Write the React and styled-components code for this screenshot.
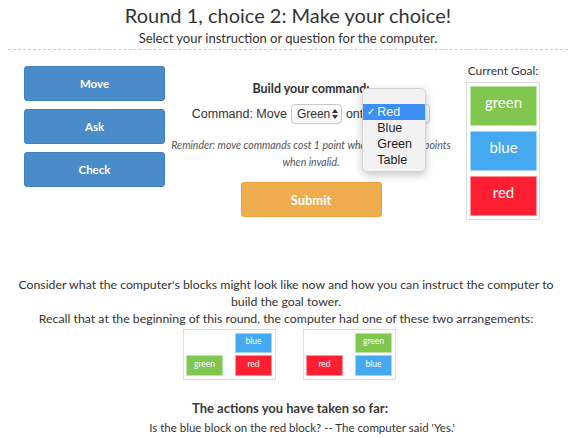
import React from "react";
import styled, { createGlobalStyle } from "styled-components";

const Global = createGlobalStyle`
  html, body { margin: 0; padding: 0; background: #fff; }
  body { font-family: Lato, "Open Sans", sans-serif; color: #333; }
`;

const Page = styled.div`
  width: 568px;
  height: 438px;
  overflow: hidden;
`;

const Header = styled.header`
  margin-left: 8px;
  padding-top: 2px;
  padding-bottom: 2px;
  border-bottom: 1px dashed #ccc;
  text-align: center;
`;

const Title = styled.h1`
  margin: 0;
  font-size: 20px;
  font-weight: 400;
  line-height: 26px;
  color: #333;
`;

const Subtitle = styled.p`
  margin: 2px 0 0;
  font-size: 13px;
  line-height: 17px;
  color: #333;
`;

const Board = styled.section`
  display: grid;
  grid-template-columns: 141px 280px 92px;
  column-gap: 6px;
  padding: 16px 0 0 24px;
  align-items: start;
`;

const ActionList = styled.div`
  display: flex;
  flex-direction: column;
  gap: 8px;
`;

const Button = styled.button`
  display: flex;
  align-items: center;
  justify-content: center;
  width: 141px;
  height: 35px;
  border: 1px solid ${(p) => (p.$tone === "warning" ? "#eea236" : "#3f82bf")};
  border-radius: 3px;
  background: ${(p) => (p.$tone === "warning" ? "#f0ad4e" : "#4a8bc9")};
  color: #fff;
  font-family: Lato, sans-serif;
  font-size: ${(p) => (p.$tone === "warning" ? "13px" : "11.5px")};
  font-weight: 700;
  padding: 0;
`;

const Builder = styled.div`
  display: flex;
  flex-direction: column;
  align-items: center;
  padding-top: 15px;
`;

const BuilderLabel = styled.div`
  font-size: 12.5px;
  font-weight: 700;
  line-height: 15px;
  color: #333;
`;

const CommandRow = styled.div`
  display: flex;
  align-items: center;
  gap: 4px;
  margin-top: 8px;
  font-family: "Liberation Sans", Arial, sans-serif;
  font-size: 12.5px;
  color: #333;
  height: 20px;
  white-space: nowrap;
`;

const Select = styled.div`
  position: relative;
  display: inline-flex;
  align-items: center;
  justify-content: space-between;
  gap: 2px;
  width: ${(p) => p.$width};
  box-sizing: border-box;
  height: 20px;
  padding: 0 3px 0 5px;
  border: 1px solid #c8c8c8;
  border-radius: 4px;
  background: linear-gradient(#fff, #f4f4f4);
  font-family: "Liberation Sans", Arial, sans-serif;
  font-size: 12px;
  color: #333;
`;

const SelectArrows = styled.svg`
  flex: none;
  width: 6px;
  height: 10px;
  fill: #333;
`;

const Popup = styled.ul`
  position: absolute;
  left: -13px;
  top: -17px;
  width: 64px;
  box-sizing: border-box;
  margin: 0;
  padding: 15px 0 3px;
  list-style: none;
  background: #f2f2f2;
  border: 1px solid #d4d4d4;
  border-radius: 5px;
  box-shadow: 0 3px 8px rgba(0, 0, 0, 0.22);
  font-family: "Liberation Sans", Arial, sans-serif;
  font-size: 12.5px;
  z-index: 2;
`;

const Option = styled.li`
  position: relative;
  height: 16px;
  line-height: 16px;
  padding-left: 14px;
  color: ${(p) => (p.$active ? "#fff" : "#222")};
  background: ${(p) => (p.$active ? "#3d8ef2" : "transparent")};
`;

const Check = styled.span`
  position: absolute;
  left: 4px;
  top: 0;
  font-size: 10px;
`;

const Reminder = styled.p`
  margin: 13px 0 0;
  font-size: 10.5px;
  font-style: italic;
  line-height: 17px;
  color: #555;
  text-align: center;
  white-space: nowrap;
`;

const SubmitWrap = styled.div`
  margin-top: 11px;
`;

const Goal = styled.div`
  display: flex;
  flex-direction: column;
  align-items: center;
`;

const GoalLabel = styled.div`
  margin: -2px 0 4px;
  font-size: 12px;
  line-height: 14px;
  color: #333;
`;

const Tower = styled.div`
  display: flex;
  flex-direction: column;
  gap: 5px;
  padding: 3px 2px 3px 3px;
  border: 1px solid #ddd;
  background: #fff;
`;

const COLORS = { green: "#80c64f", blue: "#45a9f0", red: "#fe1f32" };

const Block = styled.div`
  display: flex;
  align-items: center;
  justify-content: center;
  width: ${(p) => (p.$small ? "37px" : "67px")};
  height: ${(p) => (p.$small ? "100%" : "40px")};
  padding-bottom: ${(p) => (p.$small ? "3px" : "8px")};
  box-sizing: border-box;
  background: ${(p) => COLORS[p.$color]};
  border: 1px solid rgba(255, 255, 255, 0.5);
  color: #fff;
  font-size: ${(p) => (p.$small ? "8.5px" : "15px")};
  font-family: Lato, sans-serif;
`;

const Notes = styled.section`
  margin-top: 56px;
  text-align: center;
  font-size: 12.3px;
  line-height: 17px;
  color: #333;
  padding-left: 4px;
`;

const Note = styled.p`
  margin: 0;
`;

const Arrangements = styled.div`
  display: flex;
  justify-content: center;
  align-items: flex-start;
  gap: 27px;
  margin-top: 2px;
  padding-left: 7px;
`;

const Arrangement = styled.div`
  display: grid;
  grid-template-columns: 37px 37px;
  grid-template-rows: 20px 21px;
  column-gap: 12px;
  row-gap: 2px;
  padding: 3px 3px 3px 2px;
  border: 1px solid #ddd;
`;

const History = styled.section`
  margin-top: 19px;
  text-align: center;
`;

const HistoryTitle = styled.div`
  font-size: 13px;
  font-weight: 700;
  line-height: 18px;
  color: #3a3a3a;
  padding-left: 12px;
`;

const HistoryItem = styled.div`
  margin-top: 3px;
  font-size: 11.5px;
  line-height: 15px;
  color: #333;
  padding-left: 36px;
`;

const Empty = styled.div``;

const arrangements = [
  [null, "blue", "green", "red"],
  [null, "green", "red", "blue"],
];

const Arrows = () => (
  <SelectArrows viewBox="0 0 6 10">
    <path d="M3 0 L6 4 L0 4 Z M3 10 L6 6 L0 6 Z" />
  </SelectArrows>
);

export default function App() {
  return (
    <Page>
      <Global />
      <Header>
        <Title>Round 1, choice 2: Make your choice!</Title>
        <Subtitle>Select your instruction or question for the computer.</Subtitle>
      </Header>

      <Board>
        <ActionList>
          <Button>Move</Button>
          <Button>Ask</Button>
          <Button>Check</Button>
        </ActionList>

        <Builder>
          <BuilderLabel>Build your command:</BuilderLabel>
          <CommandRow>
            <span>Command: Move</span>
            <Select $width="51px">
              Green
              <Arrows />
            </Select>
            <span>onto</span>
            <Select $width="56px">
              Red
              <Arrows />
              <Popup>
                {["Red", "Blue", "Green", "Table"].map((o, i) => (
                  <Option key={o} $active={i === 0}>
                    {i === 0 && <Check>✓</Check>}
                    {o}
                  </Option>
                ))}
              </Popup>
            </Select>
          </CommandRow>
          <Reminder>
            Reminder: move commands cost 1 point when valid and 2 points
            <br />
            when invalid.
          </Reminder>
          <SubmitWrap>
            <Button $tone="warning">Submit</Button>
          </SubmitWrap>
        </Builder>

        <Goal>
          <GoalLabel>Current Goal:</GoalLabel>
          <Tower>
            <Block $color="green">green</Block>
            <Block $color="blue">blue</Block>
            <Block $color="red">red</Block>
          </Tower>
        </Goal>
      </Board>

      <Notes>
        <Note>
          Consider what the computer's blocks might look like now and how you can instruct the computer to
          <br />
          build the goal tower.
        </Note>
        <Note>Recall that at the beginning of this round, the computer had one of these two arrangements:</Note>
        <Arrangements>
          {arrangements.map((cells, i) => (
            <Arrangement key={i}>
              {cells.map((c, j) =>
                c ? (
                  <Block key={j} $small $color={c}>
                    {c}
                  </Block>
                ) : (
                  <Empty key={j} />
                )
              )}
            </Arrangement>
          ))}
        </Arrangements>
      </Notes>

      <History>
        <HistoryTitle>The actions you have taken so far:</HistoryTitle>
        <HistoryItem>Is the blue block on the red block? -- The computer said 'Yes.'</HistoryItem>
      </History>
    </Page>
  );
}
